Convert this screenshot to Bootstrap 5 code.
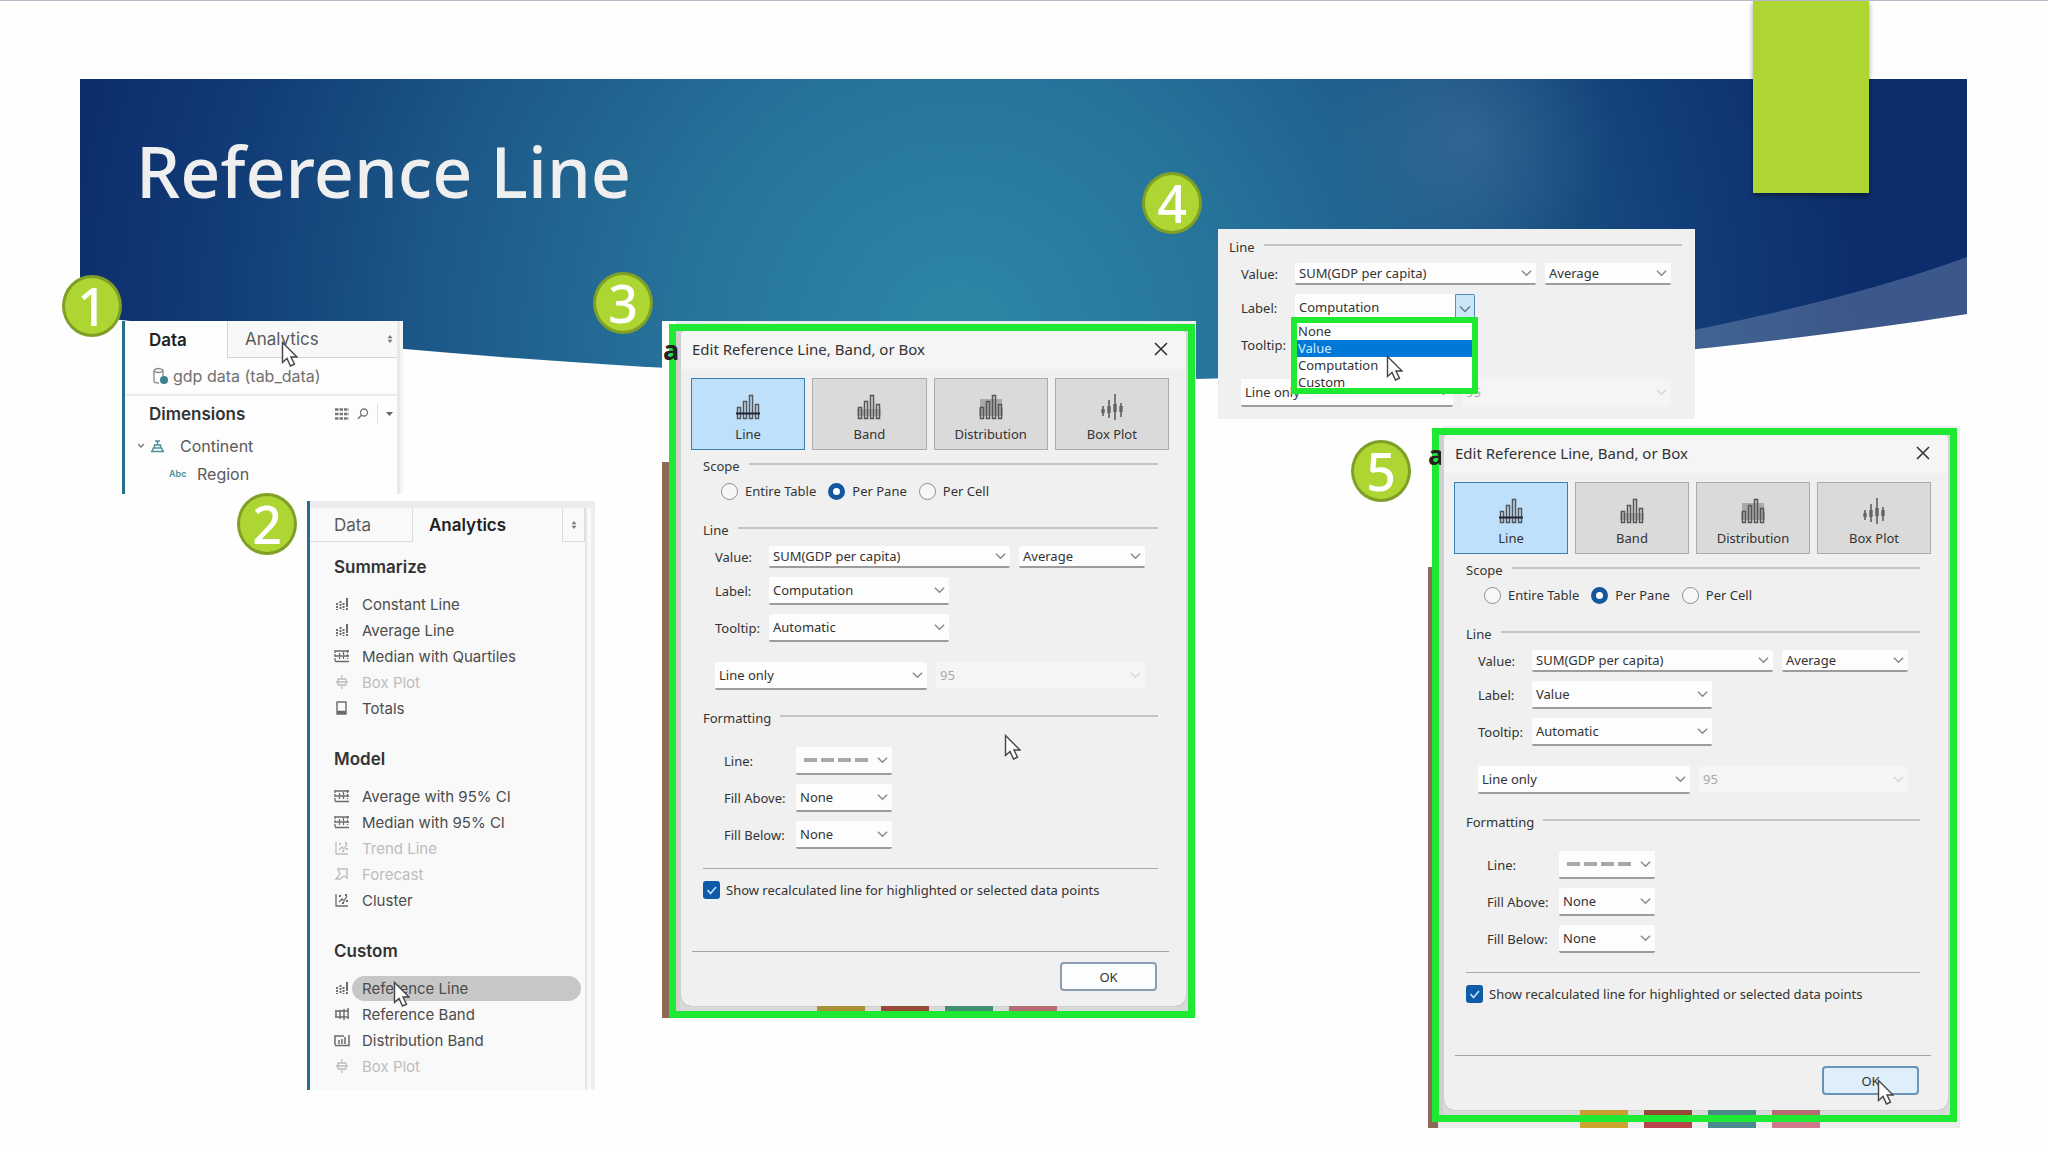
<!DOCTYPE html>
<html lang="en">
<head>
<meta charset="utf-8">
<meta name="viewport" content="width=device-width, initial-scale=1">
<title>Reference Line</title>
<link href="https://cdn.jsdelivr.net/npm/bootstrap@5.3.0/dist/css/bootstrap.min.css" rel="stylesheet">
<style>
  body { font-family: "Noto Sans", "Open Sans", sans-serif; background: #fefefe; }
  .slide { min-height: 100vh; border-top: 1px solid #b9b7c8; overflow: hidden; }

  /* slide background */
  .banner { left: 80px; right: 81px; top: 78px; height: 301px; }
  .banner svg { width: 100%; height: 100%; }
  .ribbon { right: 179px; top: -1px; width: 116px; height: 193px; background: #add633; box-shadow: 0 3px 5px rgba(0, 0, 0, .4); }
  .slide-title { left: 136px; top: 116px; font-size: 70px; line-height: 108px; font-weight: 500; color: #efefef; white-space: nowrap; }
  .step { width: 60px; height: 62px; border: 3px solid #7f9f26; background: #add633; color: #fff; font-size: 52px; line-height: 56px; font-weight: 500; z-index: 3; }
  .step1 { left: 62px; top: 274px; }
  .step2 { left: 237px; top: 492px; }
  .step3 { left: 593px; top: 271px; }
  .step4 { left: 1142px; top: 171px; }
  .step5 { left: 1351px; top: 439px; }
  .shot1 { left: 122px; top: 320px; width: 281px; height: 173px; }
  .shot2 { left: 307px; top: 500px; width: 288px; }
  .shot3 { left: 662px; top: 320px; width: 534px; padding: 3px 1px 0 7px; }
  .shot4 { left: 1218px; top: 228px; width: 477px; padding: 8px 13px 12px 11px; }
  .shot5 { left: 1428px; top: 425px; width: 532px; padding: 2px 3px 6px 4px; }
  .pointer { width: 17px; height: 26px; z-index: 4; }

  /* side pane */
  .pane { font-family: Inter, Roboto, sans-serif; font-size: 15px; line-height: 26px; color: #4c4c4c; border-left: 3px solid #27708d; background: #fdfdfd; overflow: hidden; }
  .pane-end { width: 6px; background: #e9e9e9; border-right: 3px solid #f5f5f5; }
  .pane2 .pane-end { width: 10px; background: #f9f9f9; border-left: 2px solid #e6e6e6; border-right: 4px solid #eeeeee; }
  .pane button { border: 0; background: none; padding: 0; color: inherit; text-align: left; font-size: inherit; line-height: inherit; }
  .pane .tab { font-size: 17px; color: #5a5a5a; }
  .pane .tab-on { font-weight: 600; color: #222; }
  .tabs1 { height: 37px; }
  .tabs1 .tab-on { width: 102px; padding-left: 24px; }
  .tabs1 .tab-off { padding-left: 17px; border-left: 1px solid #d4d4d4; border-bottom: 1px solid #d4d4d4; background: #f8f8f8; }
  .pane-head { font-size: 17px; font-weight: 600; color: #333; }
  .src-row { height: 38px; padding-left: 27px; font-size: 16px; color: #707070; border-bottom: 2px solid #ececec; }
  .dim-row { height: 36px; padding: 0 2px 0 24px; }
  .field-row { height: 28px; padding-left: 13px; font-size: 16px; color: #5a5a5a; }
  .field-row.inner { padding-left: 44px; }
  .abc { width: 28px; font-size: 9px; font-weight: 600; color: #4a9099; }
  .pane2 { background: #f9f9f9; }
  .strip { height: 7px; background: #ececec; }
  .tabs2 { height: 34px; }
  .tabs2 .tab-off { width: 103px; padding-left: 24px; border-right: 1px solid #dcdcdc; border-bottom: 1px solid #dcdcdc; }
  .tabs2 .tab-on { padding-left: 16px; }
  .tabs2 .more { width: 23px; border: 1px solid #dcdcdc; border-top: 0; }
  .pane2 .pane-head { padding: 12px 0 11px 24px; }
  .pane2 .later { padding-top: 25px; }
  .tools-end { padding-bottom: 11px; }
  .tool { height: 26px; padding: 0 4px 0 24px; }
  .tool svg { width: 16px; height: 14px; color: #6b6b6b; }
  .tool button { height: 25px; padding-left: 10px; margin-left: 2px; border-radius: 13px; }
  .tool button:disabled, .tool.off svg { color: #bdbdbd; }
  .tool button.picked { background: #c7c7c7; }

  /* dialog */
  .shot { background: #ececec; }
  .shot .edge { left: 0; top: 0; width: 14px; height: 141px; background: #fdfdfd; }
  .shot .edge2 { left: 0; top: 141px; width: 10px; bottom: 0; background: #8c6a56; }
  .shot .stray { left: 1px; top: 12px; width: 17px; overflow: hidden; font: bold 27px/34px "Noto Sans", sans-serif; color: #222; z-index: 2; }
  .shot5 .stray { left: 0; width: 13px; }
  .frame { border: 7px solid #1fea33; padding: 0 2px 5px 5px; background: linear-gradient(90deg, #cfcfcf 0 4px, transparent 4px), #d9d9d9; }
  .swatches { left: 155px; bottom: 7px; gap: 16px; }
  .swatches i { width: 48px; height: 5px; }
  .shot5 .swatches { left: 152px; bottom: 13px; }
  .shot5 .swatches.under { bottom: 0; }
  .shot5 .swatches.under i { height: 6px; }
  .dlg { position: relative; z-index: 1; background: #f0f0f0; border-radius: 4px 4px 10px 10px; font-size: 13px; line-height: 20px; color: #333; box-shadow: 0 0 1px #777; }
  .dlg-title { height: 38px; padding: 0 18px 2px 11px; font-size: 15px; background: #f5f5f6; border-radius: 4px 4px 0 0; }
  .dlg-title button { border: 0; background: none; padding: 0; width: 14px; line-height: 0; color: #333; }
  .kinds { padding: 9px 17px 0 10px; gap: 7px; }
  .kinds button { height: 72px; border: 1px solid #ababab; background: #dadada; color: #333; padding: 9px 0 0; line-height: 20px; }
  .kinds button.on { background: #bfe0fb; border: 1px solid #3c7fb1; }
  .kinds svg { width: 24px; height: 26px; margin-bottom: 4px; }
  .grp { padding: 6px 28px 0 22px; }
  .grp-head { height: 20px; gap: 9px; }
  .rule { height: 2px; background: #c4c4c4; margin-top: 7px; }
  .rows { padding: 6px 0 0 12px; }
  .row1 { height: 22px; margin-bottom: 9px; gap: 9px; }
  .row2 { height: 28px; margin-bottom: 9px; gap: 9px; }
  .row1 .lbl, .row2 .lbl { width: 54px; margin-right: -9px; }
  .rows .row2.gap-row { margin-top: 20px; margin-bottom: 0; }
  .fmt-head { margin-top: 18px; }
  .fmt .lbl { width: 72px; }
  .pick { height: 100%; border: 0; border-bottom: 2px solid #9c9c9c; border-radius: 2px; padding: 0 22px 0 4px; font-size: 13px; line-height: 20px; color: #333; appearance: none;
    background: #fdfdfd url("data:image/svg+xml,%3Csvg xmlns='http://www.w3.org/2000/svg' viewBox='0 0 12 8'%3E%3Cpath d='M1 1.5l5 5 5-5' fill='none' stroke='%23888' stroke-width='1.5'/%3E%3C/svg%3E") no-repeat right 4px center / 11px 8px; }
  .pick:disabled { color: #8c8c8c; background-color: #f8f8f8; border-bottom-color: #f3f3f3; opacity: .7; 
    background-image: url("data:image/svg+xml,%3Csvg xmlns='http://www.w3.org/2000/svg' viewBox='0 0 12 8'%3E%3Cpath d='M1 1.5l5 5 5-5' fill='none' stroke='%23ccc' stroke-width='1.5'/%3E%3C/svg%3E"); }
  .w241 { width: 241px; } .w126 { width: 126px; } .w180 { width: 180px; } .w212 { width: 212px; } .w210 { width: 209px; } .w96 { width: 96px; }
  .dashes { background-image: url("data:image/svg+xml,%3Csvg xmlns='http://www.w3.org/2000/svg' viewBox='0 0 12 8'%3E%3Cpath d='M1 1.5l5 5 5-5' fill='none' stroke='%23888' stroke-width='1.5'/%3E%3C/svg%3E"), url("data:image/svg+xml,%3Csvg xmlns='http://www.w3.org/2000/svg' viewBox='0 0 64 4'%3E%3Cpath d='M0 2h64' stroke='%23a8a8a8' stroke-width='4' stroke-dasharray='13 4'/%3E%3C/svg%3E");
    background-repeat: no-repeat; background-position: right 4px center, 8px center; background-size: 11px 8px, 64px 4px; }
  .scope { padding: 5px 0 19px 18px; height: 44px; }
  .scope input { appearance: none; width: 17px; height: 17px; border: 1px solid #8d8d8d; border-radius: 50%; background: #f7f7f7; margin: 0; }
  .scope input:checked { border: 5px solid #15579f; background: #fff; }
  .scope label { margin: 0 12px 0 7px; }
  .fmt { padding: 19px 0 0 21px; }
  .keep { padding: 12px 0 52px; gap: 6px; }
  .keep input { appearance: none; width: 17px; height: 18px; margin: 0; border-radius: 3px;
    background: #0f5ba9 url("data:image/svg+xml,%3Csvg xmlns='http://www.w3.org/2000/svg' viewBox='0 0 17 18'%3E%3Cpath d='M4.500 9l3 3.500 5.500-6.500' fill='none' stroke='%23bfe3ff' stroke-width='1.600'/%3E%3C/svg%3E") center / 17px 18px no-repeat; }
  .keep label { line-height: 18px; }
  .line-full { height: 1px; margin-top: 19px; background: #a9a9a9; }
  .foot { margin: 0 17px 0 11px; padding: 10px 12px 15px 0; border-top: 1px solid #a3a3a3; }
  .foot button { width: 97px; height: 29px; border: 2px solid #8b9db0; border-radius: 4px; background: #fbfdfe; color: #333; padding: 0; line-height: 20px; }
  .foot button.hot { background: #deeefa; border-color: #6a93b8; }

  /* cropped line group with its open list */
  .shot4 { background: #f0f0f0; font-size: 13px; line-height: 20px; color: #333; }
  .shot4 .open { background: url("data:image/svg+xml,%3Csvg xmlns='http://www.w3.org/2000/svg' viewBox='0 0 20 28'%3E%3Cpath d='M.5.500h19v28h-19z' fill='%23cbe6f7' stroke='%23558fb8'/%3E%3Cpath d='M5 12.500l5 5 5-5' fill='none' stroke='%23678' stroke-width='1.300'/%3E%3C/svg%3E") no-repeat right top / 20px 28px #fdfdfd; }
  .drop { left: 73px; top: 88px; width: 187px; border: 6px solid #1fea33; background: #fff; z-index: 2; }
  .drop li { height: 17px; line-height: 16px; padding-left: 1px; }
  .drop li.sel { background: #0078d7; color: #d5ecff; }
  .drop li:last-child { height: 14px; }
</style>
<script src="https://cdn.jsdelivr.net/npm/bootstrap@5.3.0/dist/js/bootstrap.bundle.min.js"></script>
</head>
<body>
<svg class="d-none" xmlns="http://www.w3.org/2000/svg">
  <symbol id="cursor" viewBox="0 0 17 26"><path d="M1.500 1.500v20l4.500-4 3.500 7.500 4-1.800-3.500-7.200h6z" fill="#fdfdfd" stroke="#444" stroke-width="1.400"/></symbol>
  <symbol id="bars" viewBox="0 0 16 14"><g stroke="currentColor" stroke-width="2" stroke-dasharray="2 1"><path d="M3 6v7M6.500 4v9M9.500 6v7"/></g><path d="M13 1v9M13 11v2" stroke="currentColor" stroke-width="2"/></symbol>
  <symbol id="table" viewBox="0 0 16 14"><g fill="none" stroke="currentColor" stroke-width="1.300"><path d="M1 2h14M1 12.500h14M1 7h14" /><path d="M1 1v12M5.500 4v6M9.500 3v7M13.500 1v9" stroke-dasharray="3 1"/></g></symbol>
  <symbol id="box" viewBox="0 0 16 14"><path d="M8 0v4M8 10v4M4 4h8v6H4zM2 7h12" fill="none" stroke="currentColor" stroke-width="1.300"/></symbol>
  <symbol id="total" viewBox="0 0 16 14"><path d="M3 1h9v12H3zM3 10.500h9M3 12h9" fill="none" stroke="currentColor" stroke-width="1.400"/></symbol>
  <symbol id="scatter" viewBox="0 0 16 14"><path d="M2 1v12h12M5 9l3-3 2 2 3-5" fill="none" stroke="currentColor" stroke-width="1.300"/><path d="M5 2h2v2H5zM11 1h2v2h-2zM8 9h2v2H8zM12 7h2v2h-2z" fill="currentColor"/></symbol>
  <symbol id="forecast" viewBox="0 0 16 14"><path d="M4 2h9v9l-3-2-4 3-4 0 4-5z" fill="none" stroke="currentColor" stroke-width="1.400"/></symbol>
  <symbol id="band" viewBox="0 0 16 14"><path d="M1 4h14M1 10h14M2 4v6M6 3v9M10 2v11M14 1v11" fill="none" stroke="currentColor" stroke-width="1.500"/></symbol>
  <symbol id="dist" viewBox="0 0 16 14"><path d="M1 12.500h14V2M1 12V3h9M5 7v4M8 6v5M11 4v7" fill="none" stroke="currentColor" stroke-width="1.500"/></symbol>
  <symbol id="cols" viewBox="0 0 24 26"><path d="M1.500 13.500h3v11h-3zM7.500 7.500h3v17h-3zM13.500 1.500h3v23h-3zM19.500 10.500h3v14h-3z" fill="none" stroke="#555" stroke-width="1.500"/></symbol>
  <symbol id="k-line" viewBox="0 0 24 26"><use href="#cols"/><path d="M0 19.500h24" stroke="#223" stroke-width="2"/></symbol>
  <symbol id="k-band" viewBox="0 0 24 26"><path d="M0 15h24v7H0z" fill="#999" opacity=".6"/><use href="#cols"/></symbol>
  <symbol id="k-dist" viewBox="0 0 24 26"><path d="M1 5h22v9H1z" fill="#aaa"/><path d="M0 14h24v8H0z" fill="#888" opacity=".6"/><use href="#cols"/></symbol>
  <symbol id="k-box" viewBox="0 0 24 26"><path d="M3 12v10M9 6v18M15 0v26M21 9v14" stroke="#555" stroke-width="1.500"/><path d="M1 15h4v4H1zM7 12h4v7H7zM13 10h4v8h-4zM19 12h4v6h-4z" fill="#555" opacity=".6"/></symbol>
  <symbol id="close" viewBox="0 0 14 14"><path d="M1 1l12 12M13 1L1 13" stroke="currentColor" stroke-width="1.600"/></symbol>
  <symbol id="updown" viewBox="0 0 6 10"><path d="M3 0l3 4H0zM3 10l3-4H0z" fill="#777"/></symbol>
</svg>

<main class="slide position-relative">
  <div class="banner position-absolute">
    <svg viewBox="0 0 1887 301" preserveAspectRatio="none" aria-hidden="true">
      <defs>
        <radialGradient id="sea" gradientUnits="userSpaceOnUse" cx="880" cy="260" r="900">
          <stop offset="0" stop-color="#2e87a5"/><stop offset=".3" stop-color="#26749b"/><stop offset=".6" stop-color="#1c5787"/><stop offset=".8" stop-color="#123f78"/><stop offset="1" stop-color="#0c2d6c"/>
        </radialGradient>
        <radialGradient id="glow" gradientUnits="userSpaceOnUse" cx="1390" cy="60" r="140">
          <stop offset="0" stop-color="#6f8db0" stop-opacity=".26"/><stop offset="1" stop-color="#6f8db0" stop-opacity="0"/>
        </radialGradient>
      </defs>
      <path d="M0 0H1887V235C1600 280 1300 301 1000 301C650 301 325 275 0 236Z" fill="url(#sea)"/>
      <path d="M1200 0H1600V200H1200Z" fill="url(#glow)"/>
      <path d="M1887 178Q1760 225 1540 265V284Q1720 265 1887 235Z" fill="#fff" opacity=".2"/>
    </svg>
  </div>
  <div class="ribbon position-absolute"></div>
  <h1 class="slide-title position-absolute m-0">Reference Line</h1>

  <div class="step step1 position-absolute rounded-circle text-center">1</div>
  <div class="step step2 position-absolute rounded-circle text-center">2</div>
  <div class="step step3 position-absolute rounded-circle text-center">3</div>
  <div class="step step4 position-absolute rounded-circle text-center">4</div>
  <div class="step step5 position-absolute rounded-circle text-center">5</div>

  <!-- 1: data pane -->
  <section class="shot1 pane position-absolute d-flex">
    <div class="flex-grow-1">
      <div class="tabs1 d-flex">
        <button class="tab tab-on">Data</button>
        <button class="tab tab-off flex-grow-1 d-flex align-items-center justify-content-between">Analytics <svg width="6" height="8" class="me-1"><use href="#updown"/></svg></button>
      </div>
      <div class="src-row d-flex align-items-center gap-1">
        <svg width="17" height="18" viewBox="0 0 17 18"><path d="M2 3v11q0 2 5 2M2 3q4-3 9 0v6M2 4q4 3 9 0" fill="none" stroke="#888" stroke-width="1.300"/><circle cx="12" cy="13" r="4" fill="#3b8090"/></svg>
        <span>gdp data (tab_data)</span>
      </div>
      <div class="dim-row d-flex align-items-center">
        <span class="pane-head me-auto">Dimensions</span>
        <svg width="14" height="12" viewBox="0 0 14 12"><path d="M0 1.500h14M0 6h14M0 10.500h14" stroke="#777" stroke-width="2.500" stroke-dasharray="3.500 1"/></svg>
        <svg width="12" height="12" viewBox="0 0 12 12" class="mx-2"><circle cx="7" cy="4.500" r="3.500" fill="none" stroke="#777" stroke-width="1.300"/><path d="M4.500 7L1 11" stroke="#777" stroke-width="1.500"/></svg>
        <svg width="18" height="20" viewBox="0 0 18 20"><path d="M.5 0v20" stroke="#ddd"/><path d="M9 8h7l-3.500 4z" fill="#666"/></svg>
      </div>
      <div class="field-row d-flex align-items-center">
        <svg width="38" height="14" viewBox="0 0 38 14"><path d="M0 5l3 3 3-3" fill="none" stroke="#777" stroke-width="1.400"/><path d="M19.500 2v4M17 2h5M16.500 8v-2h6v2M14 12l2-4M25 12l-2-4M13 12.500h13M15.500 9h8" fill="none" stroke="#4a9099" stroke-width="1.500"/></svg>
        <span class="flex-grow-1 ps-1 ms-n1">Continent</span>
      </div>
      <div class="field-row inner d-flex align-items-center"><span class="abc">Abc</span><span>Region</span></div>
    </div>
    <div class="pane-end"></div>
  </section>
  <svg class="pointer position-absolute" style="left:281px;top:340px"><use href="#cursor"/></svg>

  <!-- 2: analytics pane -->
  <section class="shot2 pane pane2 position-absolute">
    <div class="strip"></div>
    <div class="d-flex">
      <div class="tools-end flex-grow-1">
        <div class="tabs2 d-flex">
          <button class="tab tab-off">Data</button>
          <button class="tab tab-on flex-grow-1">Analytics</button>
          <button class="more d-flex align-items-center justify-content-center" aria-label="More"><svg width="6" height="8"><use href="#updown"/></svg></button>
        </div>
        <div class="pane-head">Summarize</div>
        <div class="tool d-flex align-items-center"><svg><use href="#bars"/></svg><button class="flex-grow-1">Constant Line</button></div>
        <div class="tool d-flex align-items-center"><svg><use href="#bars"/></svg><button class="flex-grow-1">Average Line</button></div>
        <div class="tool d-flex align-items-center"><svg><use href="#table"/></svg><button class="flex-grow-1">Median with Quartiles</button></div>
        <div class="tool off d-flex align-items-center"><svg><use href="#box"/></svg><button class="flex-grow-1" disabled>Box Plot</button></div>
        <div class="tool d-flex align-items-center"><svg><use href="#total"/></svg><button class="flex-grow-1">Totals</button></div>
        <div class="pane-head later">Model</div>
        <div class="tool d-flex align-items-center"><svg><use href="#table"/></svg><button class="flex-grow-1">Average with 95% CI</button></div>
        <div class="tool d-flex align-items-center"><svg><use href="#table"/></svg><button class="flex-grow-1">Median with 95% CI</button></div>
        <div class="tool off d-flex align-items-center"><svg><use href="#scatter"/></svg><button class="flex-grow-1" disabled>Trend Line</button></div>
        <div class="tool off d-flex align-items-center"><svg><use href="#forecast"/></svg><button class="flex-grow-1" disabled>Forecast</button></div>
        <div class="tool d-flex align-items-center"><svg><use href="#scatter"/></svg><button class="flex-grow-1">Cluster</button></div>
        <div class="pane-head later">Custom</div>
        <div class="tool d-flex align-items-center"><svg><use href="#bars"/></svg><button class="picked flex-grow-1">Reference Line</button></div>
        <div class="tool d-flex align-items-center"><svg><use href="#band"/></svg><button class="flex-grow-1">Reference Band</button></div>
        <div class="tool d-flex align-items-center"><svg><use href="#dist"/></svg><button class="flex-grow-1">Distribution Band</button></div>
        <div class="tool off d-flex align-items-center"><svg><use href="#box"/></svg><button class="flex-grow-1" disabled>Box Plot</button></div>
      </div>
      <div class="pane-end"></div>
    </div>
  </section>
  <svg class="pointer position-absolute" style="left:393px;top:980px"><use href="#cursor"/></svg>

  <!-- 3: dialog before the change -->
  <section class="shot shot3 position-absolute">
    <div class="edge position-absolute"></div><div class="edge2 position-absolute"></div><span class="stray position-absolute">a</span>
    <div class="frame position-relative">
      <form class="dlg">
        <div class="dlg-title d-flex align-items-center justify-content-between"><span>Edit Reference Line, Band, or Box</span><button type="button" aria-label="Close"><svg width="14" height="14"><use href="#close"/></svg></button></div>
        <div class="kinds d-flex">
          <button type="button" class="on col"><svg class="d-block mx-auto"><use href="#k-line"/></svg>Line</button>
          <button type="button" class="col"><svg class="d-block mx-auto"><use href="#k-band"/></svg>Band</button>
          <button type="button" class="col"><svg class="d-block mx-auto"><use href="#k-dist"/></svg>Distribution</button>
          <button type="button" class="col"><svg class="d-block mx-auto"><use href="#k-box"/></svg>Box Plot</button>
        </div>
        <div class="grp">
          <div class="grp-head d-flex"><span>Scope</span><div class="rule flex-grow-1"></div></div>
          <div class="scope d-flex align-items-center" role="radiogroup" aria-label="Scope">
            <input type="radio" name="scopeA" id="a1"><label for="a1">Entire Table</label>
            <input type="radio" name="scopeA" id="a2" checked><label for="a2">Per Pane</label>
            <input type="radio" name="scopeA" id="a3"><label for="a3">Per Cell</label>
          </div>
          <div class="grp-head d-flex"><span>Line</span><div class="rule flex-grow-1"></div></div>
          <div class="rows">
            <div class="row1 d-flex align-items-center"><label class="lbl" for="a4">Value:</label><select id="a4" class="pick w241"><option>SUM(GDP per capita)</option></select><select class="pick w126" aria-label="Aggregation"><option>Average</option></select></div>
            <div class="row2 d-flex align-items-center"><label class="lbl" for="a5">Label:</label><select id="a5" class="pick w180"><option>Computation</option></select></div>
            <div class="row2 d-flex align-items-center"><label class="lbl" for="a6">Tooltip:</label><select id="a6" class="pick w180"><option>Automatic</option></select></div>
            <div class="row2 gap-row d-flex"><select class="pick w212" aria-label="Interval"><option>Line only</option></select><select class="pick w210" aria-label="Confidence" disabled><option>95</option></select></div>
          </div>
          <div class="grp-head fmt-head d-flex"><span>Formatting</span><div class="rule flex-grow-1"></div></div>
          <div class="fmt">
            <div class="row2 d-flex align-items-center"><label class="lbl" for="a7">Line:</label><select id="a7" class="pick dashes w96"><option></option></select></div>
            <div class="row2 d-flex align-items-center"><label class="lbl" for="a8">Fill Above:</label><select id="a8" class="pick w96"><option>None</option></select></div>
            <div class="row2 d-flex align-items-center"><label class="lbl" for="a9">Fill Below:</label><select id="a9" class="pick w96"><option>None</option></select></div>
          </div>
          <div class="line-full"></div>
          <div class="keep d-flex align-items-center"><input type="checkbox" id="a10" checked><label for="a10">Show recalculated line for highlighted or selected data points</label></div>
        </div>
        <div class="foot text-end"><button type="button">OK</button></div>
      </form>
    </div>
    <div class="swatches position-absolute d-flex"><i style="background:#a89236"></i><i style="background:#964a35"></i><i style="background:#419070"></i><i style="background:#b56f70"></i></div>
  </section>
  <svg class="pointer position-absolute" style="left:1004px;top:733px"><use href="#cursor"/></svg>

  <!-- 4: label list open -->
  <section class="shot4 position-absolute">
    <div class="grp-head d-flex"><span>Line</span><div class="rule flex-grow-1"></div></div>
    <div class="rows">
      <div class="row1 d-flex align-items-center"><label class="lbl" for="b4">Value:</label><select id="b4" class="pick w241"><option>SUM(GDP per capita)</option></select><select class="pick w126" aria-label="Aggregation"><option>Average</option></select></div>
      <div class="row2 d-flex align-items-center"><label class="lbl" for="b5">Label:</label><select id="b5" class="pick open w180"><option>Computation</option></select></div>
      <div class="row2 d-flex align-items-center"><label class="lbl" for="b6">Tooltip:</label><select id="b6" class="pick w180"><option>Automatic</option></select></div>
      <div class="row2 gap-row d-flex"><select class="pick w212" aria-label="Interval"><option>Line only</option></select><select class="pick w210" aria-label="Confidence" disabled><option>95</option></select></div>
    </div>
    <ul class="drop position-absolute list-unstyled m-0"><li>None</li><li class="sel">Value</li><li>Computation</li><li>Custom</li></ul>
  </section>
  <svg class="pointer position-absolute" style="left:1386px;top:354px"><use href="#cursor"/></svg>

  <!-- 5: dialog after the change -->
  <section class="shot shot5 position-absolute">
    <div class="edge position-absolute"></div><div class="edge2 position-absolute"></div><span class="stray position-absolute">a</span>
    <div class="frame position-relative">
      <form class="dlg">
        <div class="dlg-title d-flex align-items-center justify-content-between"><span>Edit Reference Line, Band, or Box</span><button type="button" aria-label="Close"><svg width="14" height="14"><use href="#close"/></svg></button></div>
        <div class="kinds d-flex">
          <button type="button" class="on col"><svg class="d-block mx-auto"><use href="#k-line"/></svg>Line</button>
          <button type="button" class="col"><svg class="d-block mx-auto"><use href="#k-band"/></svg>Band</button>
          <button type="button" class="col"><svg class="d-block mx-auto"><use href="#k-dist"/></svg>Distribution</button>
          <button type="button" class="col"><svg class="d-block mx-auto"><use href="#k-box"/></svg>Box Plot</button>
        </div>
        <div class="grp">
          <div class="grp-head d-flex"><span>Scope</span><div class="rule flex-grow-1"></div></div>
          <div class="scope d-flex align-items-center" role="radiogroup" aria-label="Scope">
            <input type="radio" name="scopeC" id="c1"><label for="c1">Entire Table</label>
            <input type="radio" name="scopeC" id="c2" checked><label for="c2">Per Pane</label>
            <input type="radio" name="scopeC" id="c3"><label for="c3">Per Cell</label>
          </div>
          <div class="grp-head d-flex"><span>Line</span><div class="rule flex-grow-1"></div></div>
          <div class="rows">
            <div class="row1 d-flex align-items-center"><label class="lbl" for="c4">Value:</label><select id="c4" class="pick w241"><option>SUM(GDP per capita)</option></select><select class="pick w126" aria-label="Aggregation"><option>Average</option></select></div>
            <div class="row2 d-flex align-items-center"><label class="lbl" for="c5">Label:</label><select id="c5" class="pick w180"><option>Value</option></select></div>
            <div class="row2 d-flex align-items-center"><label class="lbl" for="c6">Tooltip:</label><select id="c6" class="pick w180"><option>Automatic</option></select></div>
            <div class="row2 gap-row d-flex"><select class="pick w212" aria-label="Interval"><option>Line only</option></select><select class="pick w210" aria-label="Confidence" disabled><option>95</option></select></div>
          </div>
          <div class="grp-head fmt-head d-flex"><span>Formatting</span><div class="rule flex-grow-1"></div></div>
          <div class="fmt">
            <div class="row2 d-flex align-items-center"><label class="lbl" for="c7">Line:</label><select id="c7" class="pick dashes w96"><option></option></select></div>
            <div class="row2 d-flex align-items-center"><label class="lbl" for="c8">Fill Above:</label><select id="c8" class="pick w96"><option>None</option></select></div>
            <div class="row2 d-flex align-items-center"><label class="lbl" for="c9">Fill Below:</label><select id="c9" class="pick w96"><option>None</option></select></div>
          </div>
          <div class="line-full"></div>
          <div class="keep d-flex align-items-center"><input type="checkbox" id="c10" checked><label for="c10">Show recalculated line for highlighted or selected data points</label></div>
        </div>
        <div class="foot text-end"><button type="button" class="hot">OK</button></div>
      </form>
    </div>
    <div class="swatches position-absolute d-flex"><i style="background:#c9a02c"></i><i style="background:#964a35"></i><i style="background:#4a8a86"></i><i style="background:#b56f70"></i></div>
    <div class="swatches under position-absolute d-flex"><i style="background:#cba32f"></i><i style="background:#b8434a"></i><i style="background:#4a8a8e"></i><i style="background:#cf788c"></i></div>
  </section>
  <svg class="pointer position-absolute" style="left:1877px;top:1078px"><use href="#cursor"/></svg>
</main>
</body>
</html>
